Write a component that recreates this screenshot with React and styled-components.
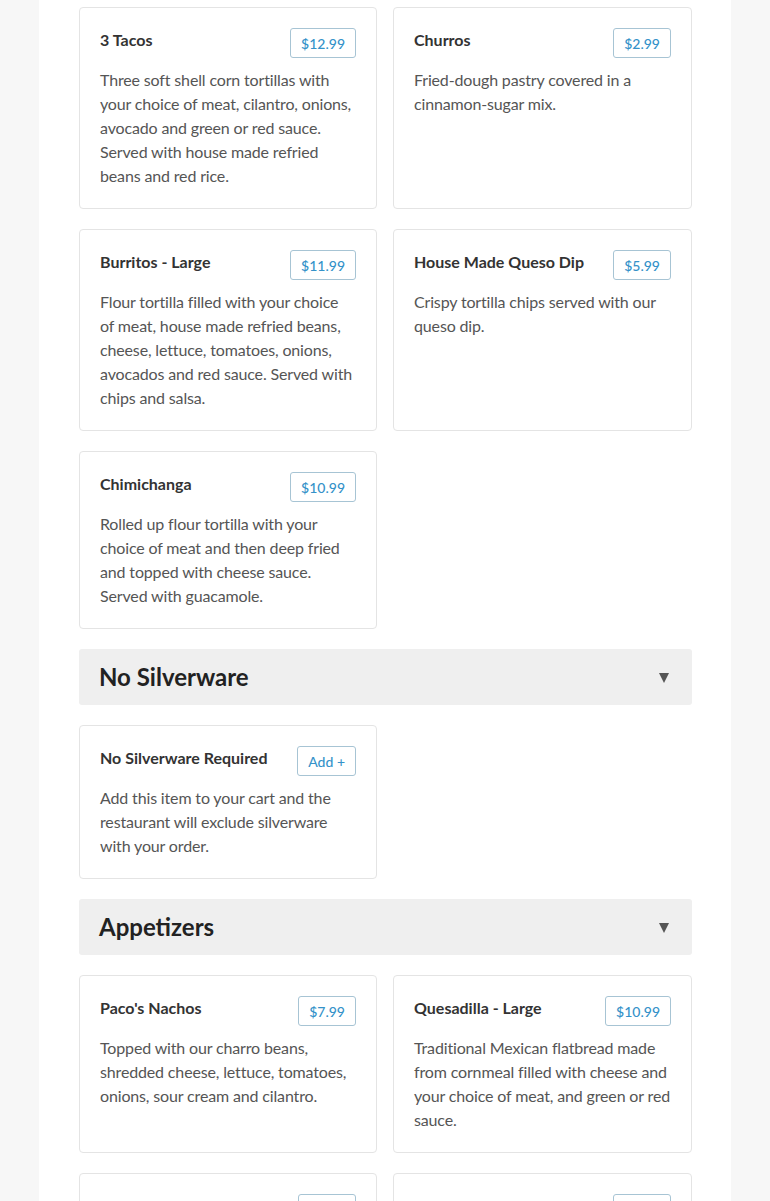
import styled, { createGlobalStyle } from "styled-components";

const GlobalStyle = createGlobalStyle`
    body {
        margin: 0;
        background: #f7f7f7;
        font-family: Lato, "Open Sans", sans-serif;
    }
`;

const sections = [
    {
        title: null,
        items: [
            {
                name: "3 Tacos",
                price: "$12.99",
                desc: "Three soft shell corn tortillas with your choice of meat, cilantro, onions, avocado and green or red sauce. Served with house made refried beans and red rice.",
            },
            {
                name: "Churros",
                price: "$2.99",
                desc: "Fried-dough pastry covered in a cinnamon-sugar mix.",
            },
            {
                name: "Burritos - Large",
                price: "$11.99",
                desc: "Flour tortilla filled with your choice of meat, house made refried beans, cheese, lettuce, tomatoes, onions, avocados and red sauce. Served with chips and salsa.",
            },
            {
                name: "House Made Queso Dip",
                price: "$5.99",
                desc: "Crispy tortilla chips served with our queso dip.",
            },
            {
                name: "Chimichanga",
                price: "$10.99",
                desc: "Rolled up flour tortilla with your choice of meat and then deep fried and topped with cheese sauce. Served with guacamole.",
            },
        ],
    },
    {
        title: "No Silverware",
        items: [
            {
                name: "No Silverware Required",
                price: "Add +",
                desc: "Add this item to your cart and the restaurant will exclude silverware with your order.",
            },
        ],
    },
    {
        title: "Appetizers",
        items: [
            {
                name: "Paco's Nachos",
                price: "$7.99",
                desc: "Topped with our charro beans, shredded cheese, lettuce, tomatoes, onions, sour cream and cilantro.",
            },
            {
                name: "Quesadilla - Large",
                price: "$10.99",
                desc: "Traditional Mexican flatbread made from cornmeal filled with cheese and your choice of meat, and green or red sauce.",
            },
            {
                name: "Chips & Salsa",
                price: "$3.99",
                desc: "Crispy tortilla chips served with our house made salsa.",
            },
            {
                name: "Guacamole & Chips",
                price: "$6.99",
                desc: "Fresh house made guacamole served with crispy tortilla chips.",
            },
        ],
    },
];

function MenuCard({ name, price, desc }) {
    return (
        <Card>
            <CardHead>
                <ItemName>{name}</ItemName>
                <PriceTag>{price}</PriceTag>
            </CardHead>
            <ItemDesc>{desc}</ItemDesc>
        </Card>
    );
}

export default function App() {
    return (
        <>
            <GlobalStyle />
            <Panel>
                {sections.map((section, i) => (
                    <Section key={i}>
                        {section.title && (
                            <SectionHeader>
                                <SectionTitle>{section.title}</SectionTitle>
                                <Caret />
                            </SectionHeader>
                        )}
                        <Grid>
                            {section.items.map((item) => (
                                <MenuCard key={item.name} {...item} />
                            ))}
                        </Grid>
                    </Section>
                ))}
            </Panel>
        </>
    );
}

const Panel = styled.div`
    width: 692px;
    box-sizing: border-box;
    margin: 0 auto;
    padding: 7px 39px 40px 40px;
    background: #ffffff;
    min-height: 100vh;
    display: flex;
    flex-direction: column;
    gap: 20px;
`;

const Section = styled.div`
    display: flex;
    flex-direction: column;
    gap: 20px;
`;

const SectionHeader = styled.div`
    height: 56px;
    box-sizing: border-box;
    padding: 0 23px 0 20px;
    background: #efefef;
    border-radius: 3px;
    display: flex;
    align-items: center;
    justify-content: space-between;
`;

const SectionTitle = styled.h2`
    margin: 0;
    font-size: 24px;
    font-weight: 700;
    color: #222222;
    padding-bottom: 1px;
`;

const Caret = styled.span`
    width: 0;
    height: 0;
    margin-top: 2px;
    border-left: 5px solid transparent;
    border-right: 5px solid transparent;
    border-top: 10px solid #555555;
`;

const Grid = styled.div`
    display: grid;
    grid-template-columns: 298px 299px;
    column-gap: 16px;
    row-gap: 20px;
`;

const Card = styled.div`
    border: 1px solid #e4e4e4;
    border-radius: 4px;
    padding: 20px;
    background: #ffffff;
`;

const CardHead = styled.div`
    display: flex;
    justify-content: space-between;
    align-items: flex-start;
    gap: 10px;
`;

const ItemName = styled.div`
    font-size: 16px;
    line-height: 24px;
    font-weight: 700;
    color: #333333;
`;

const PriceTag = styled.div`
    flex-shrink: 0;
    height: 30px;
    box-sizing: border-box;
    padding: 0 10px;
    line-height: 30px;
    font-size: 14px;
    font-weight: 500;
    color: #3592c9;
    border: 1px solid #a7c4d4;
    border-radius: 3px;
`;

const ItemDesc = styled.p`
    margin: 10px 0 0;
    font-size: 16px;
    line-height: 24px;
    letter-spacing: -0.15px;
    color: #555555;
`;
